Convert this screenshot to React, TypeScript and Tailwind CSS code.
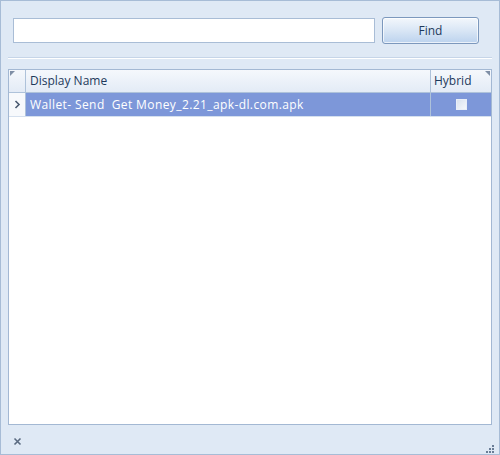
const rows = [{ name: "Wallet- Send  Get Money_2.21_apk-dl.com.apk", hybrid: false }];

export default function App() {
  return (
    <div
      className="w-[500px] h-[455px] bg-[#dfe9f5] border border-[#a7bcd6] flex flex-col text-[12px]"
      style={{ fontFamily: '"Open Sans", "Noto Sans", sans-serif' }}
    >
      {/* search bar */}
      <div className="flex items-center gap-[7px] pl-[12px] pr-[20px] pt-[16px]">
        <input
          className="flex-1 h-[25px] bg-white border border-[#a9bdd6] outline-none px-1"
          type="text"
        />
        <button className="w-[97px] h-[27px] rounded-[3px] border border-[#7c98bd] bg-gradient-to-b from-[#f3f7fc] via-[#d9e6f5] to-[#bcd3ee] text-[#1e395b] shadow-[inset_0_0_0_1px_#ffffffb0]">
          Find
        </button>
      </div>

      <div className="mx-[7px] mt-[13px] h-[2px] border-t border-[#c6d5e8] border-b-white border-b" />

      {/* grid */}
      <div className="mx-[7px] mt-[10px] flex-1 bg-white border border-[#a3b8d3] flex flex-col">
        <div className="flex h-[23px] bg-gradient-to-b from-[#f5f8fc] to-[#e3ebf6] border-b border-[#aec2da] text-[#1e395b]">
          <div className="relative w-[17px] border-r border-[#aec2da]">
            <div className="absolute left-[1px] top-[1px] w-0 h-0 border-t-[5px] border-r-[5px] border-t-[#7f8fa6] border-r-transparent" />
          </div>
          <div className="flex-1 flex items-center pl-[4px] border-r border-[#aec2da]">Display Name</div>
          <div className="relative w-[60px] flex items-center pl-[3px]">
            Hybrid
            <div className="absolute right-[1px] top-[1px] w-0 h-0 border-t-[5px] border-l-[5px] border-t-[#7f8fa6] border-l-transparent" />
          </div>
        </div>
        {rows.map((r) => (
          <div key={r.name} className="flex h-[24px] border-b border-[#d5e0ee]">
            <div className="w-[17px] flex items-center justify-center border-r border-[#aec2da] bg-[#f7f9fc]">
              <svg width="7" height="9" viewBox="0 0 7 9">
                <path d="M1.5 1 L5 4.5 L1.5 8" fill="none" stroke="#4a5a70" strokeWidth="1.6" />
              </svg>
            </div>
            <div className="flex-1 flex items-center pl-[4px] bg-[#7d97d9] text-white border-r border-[#aec2da] whitespace-pre tracking-[0.4px]">
              {r.name}
            </div>
            <div className="w-[60px] flex items-center justify-center bg-[#7d97d9]">
              <div className="w-[11px] h-[11px] border border-[#e8eef8] bg-gradient-to-br from-[#d9e2ef] to-[#f4f7fb]" />
            </div>
          </div>
        ))}
      </div>

      {/* status bar */}
      <div className="h-[29px] flex items-center justify-between pl-[12px] pr-[4px] pt-[3px]">
        <svg width="9" height="9" viewBox="0 0 9 9">
          <path d="M1.5 1.5 L7.5 7.5 M7.5 1.5 L1.5 7.5" stroke="#5a6a80" strokeWidth="1.6" />
        </svg>
        <svg width="12" height="12" viewBox="0 0 12 12" className="self-end mb-[1px]">
          {[
            [9, 1],
            [6, 4],
            [9, 4],
            [3, 7],
            [6, 7],
            [9, 7],
          ].map(([x, y]) => (
            <rect key={`${x}-${y}`} x={x} y={y + 3} width="2" height="2" fill="#6a7d96" />
          ))}
        </svg>
      </div>
    </div>
  );
}
